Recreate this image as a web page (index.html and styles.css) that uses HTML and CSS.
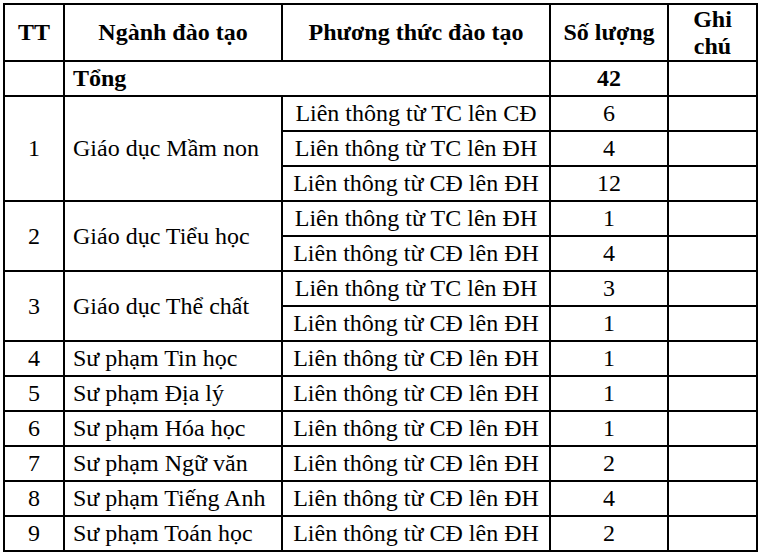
FILE: index.html
```html
<!DOCTYPE html>
<html lang="vi">
<head>
<meta charset="utf-8">
<link rel="stylesheet" href="styles.css">
</head>
<body>
<table class="tbl">
  <colgroup>
    <col class="c1"><col class="c2"><col class="c3"><col class="c4"><col class="c5">
  </colgroup>
  <thead>
    <tr class="head">
      <th>TT</th>
      <th>Ngành đào tạo</th>
      <th>Phương thức đào tạo</th>
      <th>Số lượng</th>
      <th class="note">Ghi<br>chú</th>
    </tr>
  </thead>
  <tbody>
    <tr>
      <td></td>
      <td colspan="2" class="left bold">Tổng</td>
      <td class="num bold">42</td>
      <td></td>
    </tr>
    <tr>
      <td rowspan="3" class="num">1</td>
      <td rowspan="3" class="left">Giáo dục Mầm non</td>
      <td class="mid">Liên thông từ TC lên CĐ</td>
      <td class="num">6</td>
      <td></td>
    </tr>
    <tr><td class="mid">Liên thông từ TC lên ĐH</td><td class="num">4</td><td></td></tr>
    <tr><td class="mid">Liên thông từ CĐ lên ĐH</td><td class="num">12</td><td></td></tr>
    <tr>
      <td rowspan="2" class="num">2</td>
      <td rowspan="2" class="left">Giáo dục Tiểu học</td>
      <td class="mid">Liên thông từ TC lên ĐH</td>
      <td class="num">1</td>
      <td></td>
    </tr>
    <tr><td class="mid">Liên thông từ CĐ lên ĐH</td><td class="num">4</td><td></td></tr>
    <tr>
      <td rowspan="2" class="num">3</td>
      <td rowspan="2" class="left">Giáo dục Thể chất</td>
      <td class="mid">Liên thông từ TC lên ĐH</td>
      <td class="num">3</td>
      <td></td>
    </tr>
    <tr><td class="mid">Liên thông từ CĐ lên ĐH</td><td class="num">1</td><td></td></tr>
    <tr><td class="num">4</td><td class="left">Sư phạm Tin học</td><td class="mid">Liên thông từ CĐ lên ĐH</td><td class="num">1</td><td></td></tr>
    <tr><td class="num">5</td><td class="left">Sư phạm Địa lý</td><td class="mid">Liên thông từ CĐ lên ĐH</td><td class="num">1</td><td></td></tr>
    <tr><td class="num">6</td><td class="left">Sư phạm Hóa học</td><td class="mid">Liên thông từ CĐ lên ĐH</td><td class="num">1</td><td></td></tr>
    <tr><td class="num">7</td><td class="left">Sư phạm Ngữ văn</td><td class="mid">Liên thông từ CĐ lên ĐH</td><td class="num">2</td><td></td></tr>
    <tr><td class="num">8</td><td class="left">Sư phạm Tiếng Anh</td><td class="mid">Liên thông từ CĐ lên ĐH</td><td class="num">4</td><td></td></tr>
    <tr><td class="num">9</td><td class="left">Sư phạm Toán học</td><td class="mid">Liên thông từ CĐ lên ĐH</td><td class="num">2</td><td></td></tr>
  </tbody>
</table>
</body>
</html>
```
FILE: styles.css
```css
html, body {
  margin: 0;
  padding: 0;
  background: #fff;
}
body {
  padding: 3px 0 0 3px;
  font-family: "Liberation Serif", "Times New Roman", serif;
  font-size: 24px;
  color: #000;
}
.tbl {
  border-collapse: collapse;
  table-layout: fixed;
  width: 755px;
}
.c1 { width: 60px; }
.c2 { width: 218px; }
.c3 { width: 268px; }
.c4 { width: 118px; }
.c5 { width: 89px; }
.tbl th,
.tbl td {
  border: 2px solid #000;
  padding: 0;
  height: 35px;
  box-sizing: border-box;
  vertical-align: middle;
  line-height: 27px;
  white-space: nowrap;
}
.head th {
  height: 57px;
  font-weight: bold;
  text-align: center;
}
.tbl td.left {
  text-align: left;
  padding-left: 8px;
}
.tbl td.mid,
.tbl td.num {
  text-align: center;
}
.bold {
  font-weight: bold;
}
```
